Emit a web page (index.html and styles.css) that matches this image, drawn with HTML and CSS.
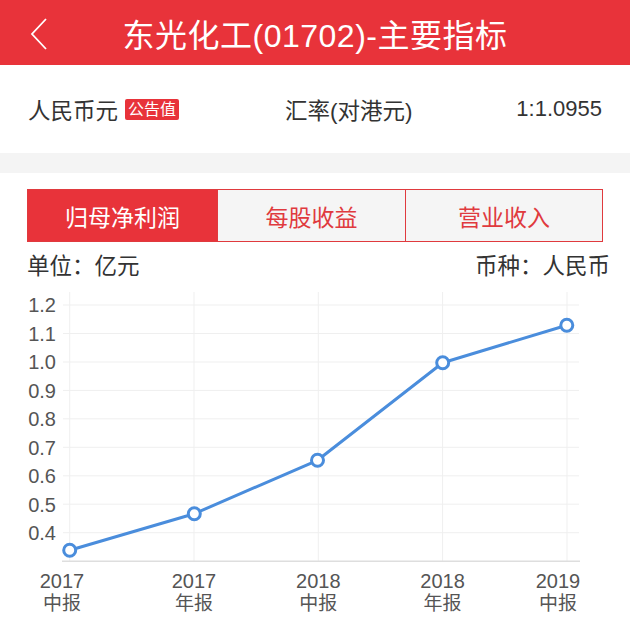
FILE: index.html
```html
<!DOCTYPE html>
<html lang="zh">
<head>
<meta charset="utf-8">
<link rel="stylesheet" href="styles.css">
</head>
<body>
<header class="topbar">
  <div class="back">
    <svg width="20" height="34" viewBox="0 0 20 34"><polyline points="17,2 3,17 17,32" fill="none" stroke="#fff" stroke-width="1.8" stroke-linejoin="miter"/></svg>
  </div>
  <h1 class="title">东光化工(01702)-主要指标</h1>
  <div></div>
</header>
<section class="info">
  <div class="cur">人民币元<span class="badge">公告值</span></div>
  <div class="rate-label">汇率(对港元)</div>
  <div class="rate">1:1.0955</div>
</section>
<div class="band"></div>
<section class="panel">
  <div class="tabs">
    <div class="tab active">归母净利润</div>
    <div class="tab">每股收益</div>
    <div class="tab">营业收入</div>
  </div>
  <div class="units">
    <span>单位：亿元</span>
    <span>币种：人民币</span>
  </div>
  <svg class="chart" width="630" height="340" viewBox="0 285 630 340">
    <g class="grid">
      <line x1="63" y1="304" x2="579" y2="304"/>
      <line x1="63" y1="332.5" x2="579" y2="332.5"/>
      <line x1="63" y1="361" x2="579" y2="361"/>
      <line x1="63" y1="389.4" x2="579" y2="389.4"/>
      <line x1="63" y1="417.8" x2="579" y2="417.8"/>
      <line x1="63" y1="446.3" x2="579" y2="446.3"/>
      <line x1="63" y1="474.8" x2="579" y2="474.8"/>
      <line x1="63" y1="503.2" x2="579" y2="503.2"/>
      <line x1="63" y1="531.7" x2="579" y2="531.7"/>
      <line x1="69.7" y1="291" x2="69.7" y2="560"/>
      <line x1="194" y1="291" x2="194" y2="560"/>
      <line x1="318.3" y1="291" x2="318.3" y2="560"/>
      <line x1="442.6" y1="291" x2="442.6" y2="560"/>
      <line x1="567" y1="291" x2="567" y2="560"/>
    </g>
    <line class="axis" x1="62" y1="560.3" x2="580" y2="560.3"/>
    <g class="ylab">
      <text x="56" y="311">1.2</text>
      <text x="56" y="339.5">1.1</text>
      <text x="56" y="368">1.0</text>
      <text x="56" y="396.5">0.9</text>
      <text x="56" y="425">0.8</text>
      <text x="56" y="453.5">0.7</text>
      <text x="56" y="482">0.6</text>
      <text x="56" y="510.5">0.5</text>
      <text x="56" y="539">0.4</text>
    </g>
    <g class="xlab">
      <text x="62" y="586.5">2017</text><text class="cn" x="62" y="609">中报</text>
      <text x="194" y="586.5">2017</text><text class="cn" x="194" y="609">年报</text>
      <text x="318.3" y="586.5">2018</text><text class="cn" x="318.3" y="609">中报</text>
      <text x="442.6" y="586.5">2018</text><text class="cn" x="442.6" y="609">年报</text>
      <text x="558" y="586.5">2019</text><text class="cn" x="558" y="609">中报</text>
    </g>
    <polyline class="line" points="69.7,549.3 194.3,512.7 317.5,459.3 442.7,361.7 566.8,324.3"/>
    <g class="dots">
      <circle cx="69.7" cy="549.3" r="6"/>
      <circle cx="194.3" cy="512.7" r="6"/>
      <circle cx="317.5" cy="459.3" r="6"/>
      <circle cx="442.7" cy="361.7" r="6"/>
      <circle cx="566.8" cy="324.3" r="6"/>
    </g>
  </svg>
</section>
</body>
</html>
```
FILE: styles.css
```css
* { box-sizing: border-box; }
html, body { margin: 0; padding: 0; background: #fff; }
body {
  width: 630px;
  font-family: "Liberation Sans", "Noto Sans CJK SC", sans-serif;
  color: #333;
}
.topbar {
  height: 65px;
  background: #e8333a;
  display: grid;
  grid-template-columns: 1fr auto 1fr;
  align-items: center;
}
.back { padding-left: 29px; display: flex; align-items: center; padding-top: 2px; }
.title {
  margin: 0;
  font-size: 32px;
  font-weight: normal;
  color: #fff;
  letter-spacing: 0.5px;
  padding-top: 1px;
}
.info {
  height: 88px;
  display: flex;
  align-items: center;
  padding: 0 28px 0 28px;
  font-size: 22.5px;
  color: #333;
}
.cur { display: flex; align-items: center; width: 257px; }
.badge {
  margin-left: 7px;
  background: #e8333a;
  color: #fff;
  font-size: 16px;
  line-height: 21px;
  height: 21px;
  padding: 0 3px;
  border-radius: 2px;
}
.rate-label { flex: 1; }
.rate { text-align: right; font-size: 22px; }
.band { height: 20px; background: #f4f4f4; }
.panel { padding-top: 16px; }
.tabs {
  margin: 0 27px;
  height: 53px;
  display: grid;
  grid-template-columns: 189px 188px 1fr;
  border: 1.5px solid #e03a3e;
  background: #f5f5f5;
}
.tab {
  display: flex;
  align-items: center;
  justify-content: center;
  font-size: 23px;
  color: #e03a3e;
  border-left: 1.5px solid #e03a3e;
}
.tab:first-child { border-left: none; }
.tab.active { background: #e8333a; color: #fff; }
.units {
  display: flex;
  justify-content: space-between;
  padding: 0 20px 0 27px;
  height: 44px;
  align-items: center;
  font-size: 22.5px;
  color: #333;
}
.chart { display: block; }
.grid line { stroke: #efefef; stroke-width: 1; }
.axis { stroke: #dedede; stroke-width: 1.5; }
.ylab text { text-anchor: end; font-size: 20px; fill: #555; }
.xlab text { text-anchor: middle; font-size: 20px; fill: #555; }
.xlab .cn { font-size: 19px; }
.line { fill: none; stroke: #4a8ddc; stroke-width: 3; stroke-linejoin: round; }
.dots circle { fill: #fff; stroke: #4a8ddc; stroke-width: 3; }
```
